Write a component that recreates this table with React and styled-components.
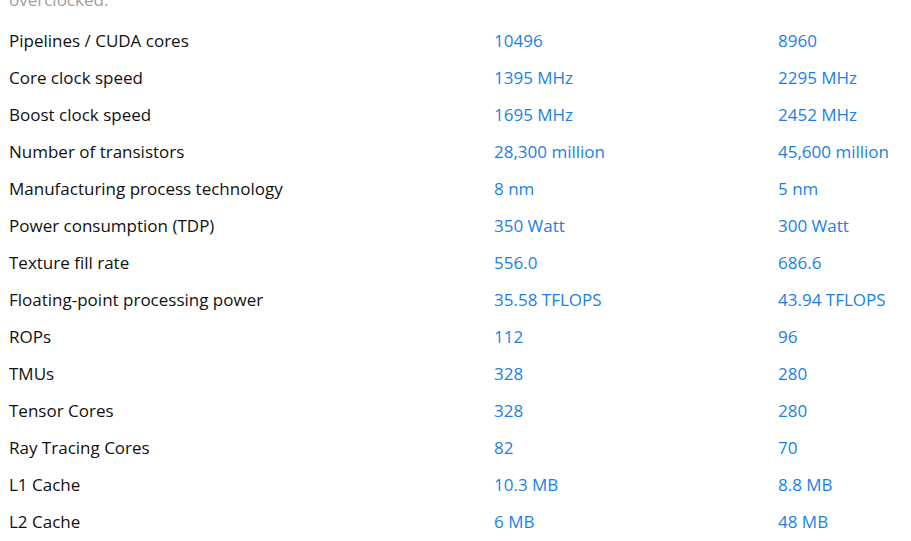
import React from 'react';
import styled, { createGlobalStyle } from 'styled-components';

const GlobalStyle = createGlobalStyle`
  body {
    margin: 0;
    background: #ffffff;
    font-family: "Open Sans", "Noto Sans", sans-serif;
  }
`;

const specs = [
  ['Pipelines / CUDA cores', '10496', '8960'],
  ['Core clock speed', '1395 MHz', '2295 MHz'],
  ['Boost clock speed', '1695 MHz', '2452 MHz'],
  ['Number of transistors', '28,300 million', '45,600 million'],
  ['Manufacturing process technology', '8 nm', '5 nm'],
  ['Power consumption (TDP)', '350 Watt', '300 Watt'],
  ['Texture fill rate', '556.0', '686.6'],
  ['Floating-point processing power', '35.58 TFLOPS', '43.94 TFLOPS'],
  ['ROPs', '112', '96'],
  ['TMUs', '328', '280'],
  ['Tensor Cores', '328', '280'],
  ['Ray Tracing Cores', '82', '70'],
  ['L1 Cache', '10.3 MB', '8.8 MB'],
  ['L2 Cache', '6 MB', '48 MB'],
];

const App = () => {
  return (
    <>
      <GlobalStyle />
      <Wrapper>
        <Note>overclocked.</Note>
        <SpecTable>
          {specs.map(([name, a, b]) => (
            <Row key={name}>
              <Label>{name}</Label>
              <Value>{a}</Value>
              <Value>{b}</Value>
            </Row>
          ))}
        </SpecTable>
      </Wrapper>
    </>
  );
};

const Wrapper = styled.div`
  padding: 0 9px;
  margin-top: -11px;
`;

const Note = styled.div`
  color: #a0a0a0;
  font-size: 17px;
  line-height: 22px;
  height: 22px;
  margin-bottom: 11px;
`;

const SpecTable = styled.div`
  display: flex;
  flex-direction: column;
`;

const Row = styled.div`
  display: grid;
  grid-template-columns: 485px 284px 1fr;
  height: 37px;
  align-items: center;
  font-size: 17px;
`;

const Label = styled.div`
  color: #111111;
`;

const Value = styled.div`
  color: #1a7fe8;
`;

export default App;
